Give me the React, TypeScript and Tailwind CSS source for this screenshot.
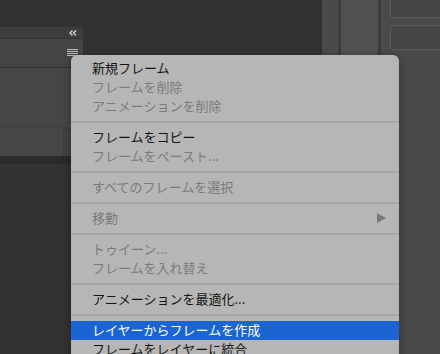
import React from "react";

type Item =
  | { kind: "item"; label: string; disabled?: boolean; submenu?: boolean; active?: boolean }
  | { kind: "sep" };

const menuItems: Item[] = [
  { kind: "item", label: "新規フレーム" },
  { kind: "item", label: "フレームを削除", disabled: true },
  { kind: "item", label: "アニメーションを削除", disabled: true },
  { kind: "sep" },
  { kind: "item", label: "フレームをコピー" },
  { kind: "item", label: "フレームをペースト...", disabled: true },
  { kind: "sep" },
  { kind: "item", label: "すべてのフレームを選択", disabled: true },
  { kind: "sep" },
  { kind: "item", label: "移動", disabled: true, submenu: true },
  { kind: "sep" },
  { kind: "item", label: "トゥイーン...", disabled: true },
  { kind: "item", label: "フレームを入れ替え", disabled: true },
  { kind: "sep" },
  { kind: "item", label: "アニメーションを最適化..." },
  { kind: "sep" },
  { kind: "item", label: "レイヤーからフレームを作成", active: true },
  { kind: "item", label: "フレームをレイヤーに統合" },
];

function PanelIcons() {
  return (
    <>
      {/* collapse chevrons */}
      <svg width="8" height="6" viewBox="0 0 8 6" className="absolute left-[69px] top-[30px]">
        <path d="M3.5 0.5 L1 3 L3.5 5.5 M7 0.5 L4.5 3 L7 5.5" stroke="#d6d6d6" strokeWidth="1.4" fill="none" />
      </svg>
      {/* panel menu */}
      <svg width="11" height="8" viewBox="0 0 11 8" className="absolute left-[67px] top-[49px]">
        <rect x="0" y="0" width="11" height="1" fill="#bdbdbd" />
        <rect x="0" y="2" width="11" height="1" fill="#bdbdbd" />
        <rect x="0" y="4" width="11" height="1" fill="#bdbdbd" />
        <rect x="0" y="6" width="11" height="1" fill="#bdbdbd" />
      </svg>
    </>
  );
}

export default function App() {
  return (
    <div
      className="relative w-[440px] h-[354px] overflow-hidden bg-[#323232] flex"
      style={{ fontFamily: '"Noto Sans CJK JP", "Noto Sans", sans-serif' }}
    >
      {/* Left workspace with the animation panel */}
      <div className="w-[322px] flex flex-col">
        <div className="mt-[27px] w-[83px] h-[129px] rounded-tr-[4px] bg-[#424242] flex flex-col overflow-hidden">
          <div className="h-[12px] bg-[#3d3d3d] border-b border-[#333333]" />
          <div className="h-[29px] bg-[#444444] border-b border-[#363636]" />
          <div className="h-[60px] bg-[#464646] border-b border-[#404040]" />
          <div className="flex-1 flex justify-end bg-[#464646]">
            <div className="w-[8px] mr-[12px] bg-[#424242] border-t border-l border-[#3b3b3b]" />
          </div>
        </div>
        <div className="w-[83px] h-[8px] bg-[#2b2b2b]" />
      </div>

      {/* Right dock */}
      <div className="flex-1 flex bg-[#4b4b4b]">
        <div className="w-[16px] bg-[#4a4a4a]" />
        <div className="w-[3px] bg-[#3c3c3c]" />
        <div className="w-[37px] bg-[#505050]" />
        <div className="w-[3px] bg-[#3c3c3c]" />
        <div className="flex-1 pl-[9px] flex flex-col gap-[7px] bg-[#4a4a4a]">
          <div className="h-[19px] -mt-px rounded-bl-[3px] border border-r-0 border-[#5b5b5b] bg-[#454545]" />
          <div className="h-[25px] rounded-l-[3px] border border-r-0 border-[#5b5b5b] bg-[#454545]" />
        </div>
      </div>

      <PanelIcons />

      {/* Context menu */}
      <div className="absolute left-[71px] top-[55px] w-[328px] h-[310px] rounded-t-[6px] bg-[#b6b6b6] pt-[4px] shadow-[0_2px_8px_rgba(0,0,0,0.35)] text-[13px] leading-[19px]">
        {menuItems.map((it, i) =>
          it.kind === "sep" ? (
            <div key={i} className="h-[12px] flex items-center">
              <div className="w-full h-[2px] bg-[#a6a6a6]" />
            </div>
          ) : (
            <div
              key={i}
              className={
                "h-[19px] pl-[21px] pr-[13px] pb-[2px] flex items-center justify-between " +
                (it.active
                  ? "bg-[#1b65d2] text-white"
                  : it.disabled
                  ? "text-[#7b7b7b]"
                  : "text-[#151515]")
              }
            >
              <span>{it.label}</span>
              {it.submenu && (
                <svg width="9" height="10" viewBox="0 0 9 10">
                  <path d="M0 0 L9 5 L0 10 Z" fill="#7a7a7a" />
                </svg>
              )}
            </div>
          )
        )}
      </div>
    </div>
  );
}
